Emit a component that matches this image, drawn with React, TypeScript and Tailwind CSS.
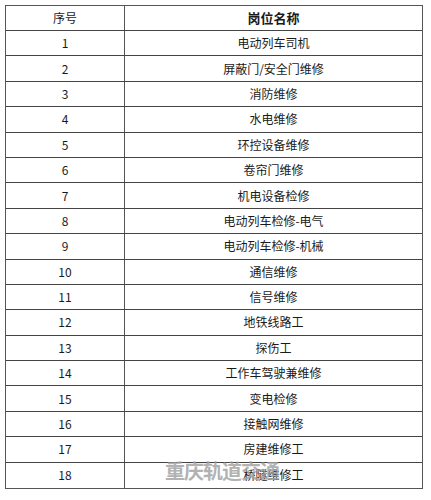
const rows = [
  '电动列车司机',
  '屏蔽门/安全门维修',
  '消防维修',
  '水电维修',
  '环控设备维修',
  '卷帘门维修',
  '机电设备检修',
  '电动列车检修-电气',
  '电动列车检修-机械',
  '通信维修',
  '信号维修',
  '地铁线路工',
  '探伤工',
  '工作车驾驶兼维修',
  '变电检修',
  '接触网维修',
  '房建维修工',
  '桥隧维修工',
];

const font = { fontFamily: '"Noto Sans CJK SC", "DejaVu Sans", sans-serif' };

export default function App() {
  return (
    <div className="w-[431px] h-[500px] bg-white pt-[5px] pl-[5px]" style={font}>
      <div className="relative w-[418px] border-[1.5px] border-[#555] text-[12px] text-[#1a1a1a]">
        <div className="flex h-[25px] border-b border-[#444]">
          <div className="w-[119px] border-r-[1.5px] border-[#555] flex items-center justify-center">序号</div>
          <div className="flex-1 flex items-center justify-center font-bold text-[13px]">岗位名称</div>
        </div>
        {rows.map((name, i) => (
          <div
            key={i}
            className={`flex h-[25.4px] ${i < rows.length - 1 ? 'border-b border-[#444]' : ''}`}
          >
            <div className="w-[119px] border-r-[1.5px] border-[#555] flex items-center justify-center">
              {i + 1}
            </div>
            <div className="flex-1 flex items-center justify-center">{name}</div>
          </div>
        ))}
        <div className="absolute left-[159px] bottom-[2px] text-[20px] font-bold text-[#a0a0a0] opacity-80 tracking-[-1px]">
          重庆轨道交通
        </div>
      </div>
    </div>
  );
}
